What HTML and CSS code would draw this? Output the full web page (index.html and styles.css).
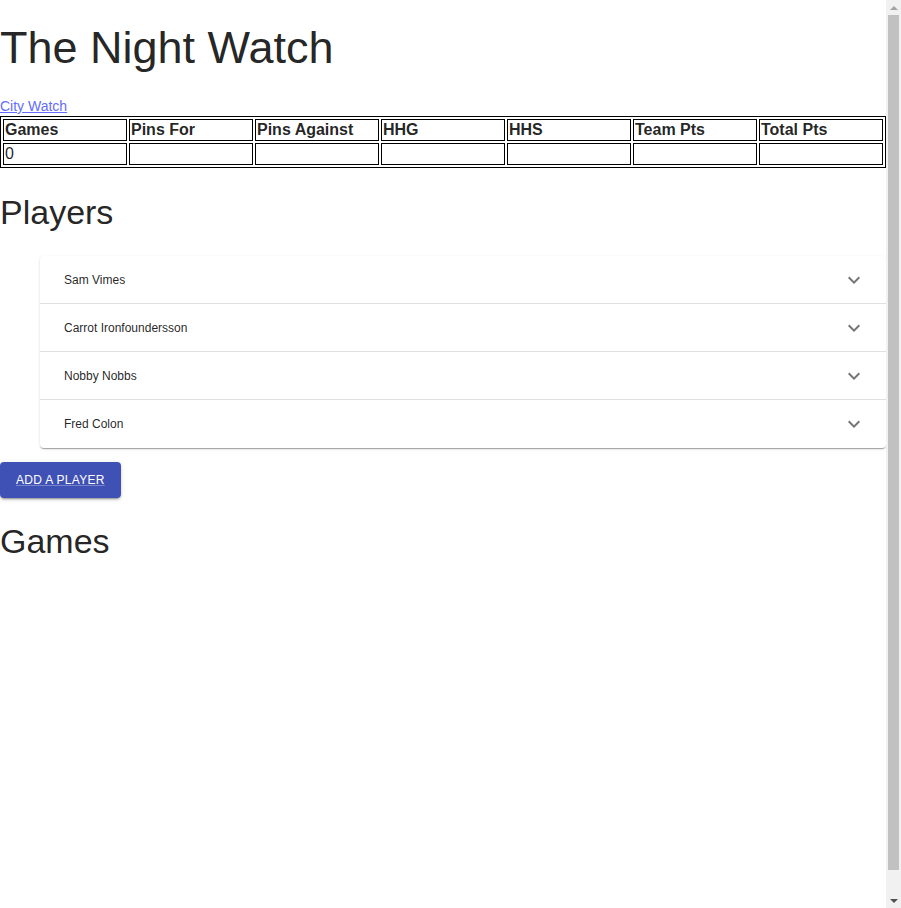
FILE: index.html
```html
<!DOCTYPE html>
<html lang="en">
<head>
<meta charset="utf-8">
<title>The Night Watch</title>
<link rel="stylesheet" href="styles.css">
</head>
<body>
<div class="page">
  <h1 class="title">The Night Watch</h1>
  <div class="league"><a class="league-link" href="#">City Watch</a></div>
  <table class="stats">
    <thead>
      <tr>
        <th>Games</th><th>Pins For</th><th>Pins Against</th><th>HHG</th><th>HHS</th><th>Team Pts</th><th>Total Pts</th>
      </tr>
    </thead>
    <tbody>
      <tr>
        <td>0</td><td></td><td></td><td></td><td></td><td></td><td></td>
      </tr>
    </tbody>
  </table>

  <h2 class="section-title players-title">Players</h2>
  <div class="accordion">
    <div class="acc-row"><span class="acc-name">Sam Vimes</span><svg class="acc-icon" viewBox="0 0 24 24" width="24" height="24"><path d="M16.59 8.59L12 13.17 7.41 8.59 6 10l6 6 6-6z"/></svg></div>
    <div class="acc-row"><span class="acc-name">Carrot Ironfoundersson</span><svg class="acc-icon" viewBox="0 0 24 24" width="24" height="24"><path d="M16.59 8.59L12 13.17 7.41 8.59 6 10l6 6 6-6z"/></svg></div>
    <div class="acc-row"><span class="acc-name">Nobby Nobbs</span><svg class="acc-icon" viewBox="0 0 24 24" width="24" height="24"><path d="M16.59 8.59L12 13.17 7.41 8.59 6 10l6 6 6-6z"/></svg></div>
    <div class="acc-row"><span class="acc-name">Fred Colon</span><svg class="acc-icon" viewBox="0 0 24 24" width="24" height="24"><path d="M16.59 8.59L12 13.17 7.41 8.59 6 10l6 6 6-6z"/></svg></div>
  </div>
  <div class="actions"><a class="btn" href="#">Add a player</a></div>

  <h2 class="section-title games-title">Games</h2>
</div>

<div class="scrollbar" aria-hidden="true">
  <div class="sb-arrow sb-up"></div>
  <div class="sb-track"><div class="sb-thumb"></div></div>
  <div class="sb-arrow sb-down"></div>
</div>
</body>
</html>
```

FILE: styles.css
```css
html, body {
  margin: 0;
  padding: 0;
}
body {
  font-family: "Liberation Sans", Arial, sans-serif;
  color: rgba(0, 0, 0, 0.87);
  background: #fff;
}
.page {
  width: 886px;
  min-height: 908px;
  display: flow-root;
}
.title {
  font-size: 45px;
  font-weight: 400;
  line-height: 52px;
  margin: 22px 0 23px;
}
.league {
  font-size: 14px;
  line-height: 19px;
}
.league-link {
  color: #646cff;
  text-decoration: underline;
}
.stats {
  width: 100%;
  table-layout: fixed;
  border: 1px solid #000;
  border-spacing: 2px;
  border-collapse: separate;
  font-size: 16px;
  color: rgba(0, 0, 0, 0.87);
}
.stats th,
.stats td {
  border: 1px solid #000;
  padding: 1px;
  text-align: left;
  height: 18px;
  line-height: 18px;
}
.stats th {
  font-weight: 700;
}
.section-title {
  font-size: 34px;
  font-weight: 400;
  line-height: 42px;
  margin: 0;
}
.players-title {
  margin-top: 23px;
  margin-bottom: 23px;
}
.accordion {
  margin-left: 40px;
  background: #fff;
  border-radius: 4px;
  box-shadow: 0px 2px 1px -1px rgba(0,0,0,0.2), 0px 1px 1px 0px rgba(0,0,0,0.14), 0px 1px 3px 0px rgba(0,0,0,0.12);
}
.acc-row {
  box-sizing: border-box;
  height: 48px;
  display: flex;
  align-items: center;
  justify-content: space-between;
  padding: 0 20px 0 24px;
  font-size: 12px;
  border-bottom: 1px solid rgba(0, 0, 0, 0.12);
}
.acc-row:last-child {
  border-bottom: none;
}
.acc-icon {
  fill: rgba(0, 0, 0, 0.54);
  flex: none;
}
.actions {
  margin-top: 14px;
  display: flex;
}
.btn {
  display: inline-flex;
  align-items: center;
  height: 36px;
  padding: 0 16px;
  background: #3f51b5;
  color: #fff;
  font-size: 12px;
  letter-spacing: 0.3px;
  text-transform: uppercase;
  border-radius: 4px;
  text-decoration: underline;
  text-decoration-color: rgba(255, 255, 255, 0.3);
  box-shadow: 0px 3px 1px -2px rgba(0,0,0,0.2), 0px 2px 2px 0px rgba(0,0,0,0.14), 0px 1px 5px 0px rgba(0,0,0,0.12);
}
.games-title {
  margin-top: 22px;
}

/* decorative browser scrollbar overlay */
.scrollbar {
  position: fixed;
  top: 0;
  right: 0;
  width: 15px;
  height: 908px;
  background: #f1f1f1;
  display: flex;
  flex-direction: column;
}
.sb-arrow {
  height: 15px;
  flex: none;
  display: flex;
  align-items: center;
  justify-content: center;
}
.sb-arrow::before {
  content: "";
  width: 0;
  height: 0;
  border-left: 4px solid transparent;
  border-right: 4px solid transparent;
}
.sb-up::before {
  border-bottom: 4px solid #a3a3a3;
}
.sb-down::before {
  border-top: 4px solid #505050;
}
.sb-track {
  flex: 1;
  padding: 0 2px;
}
.sb-thumb {
  height: 855px;
  background: #c1c1c1;
}
```
